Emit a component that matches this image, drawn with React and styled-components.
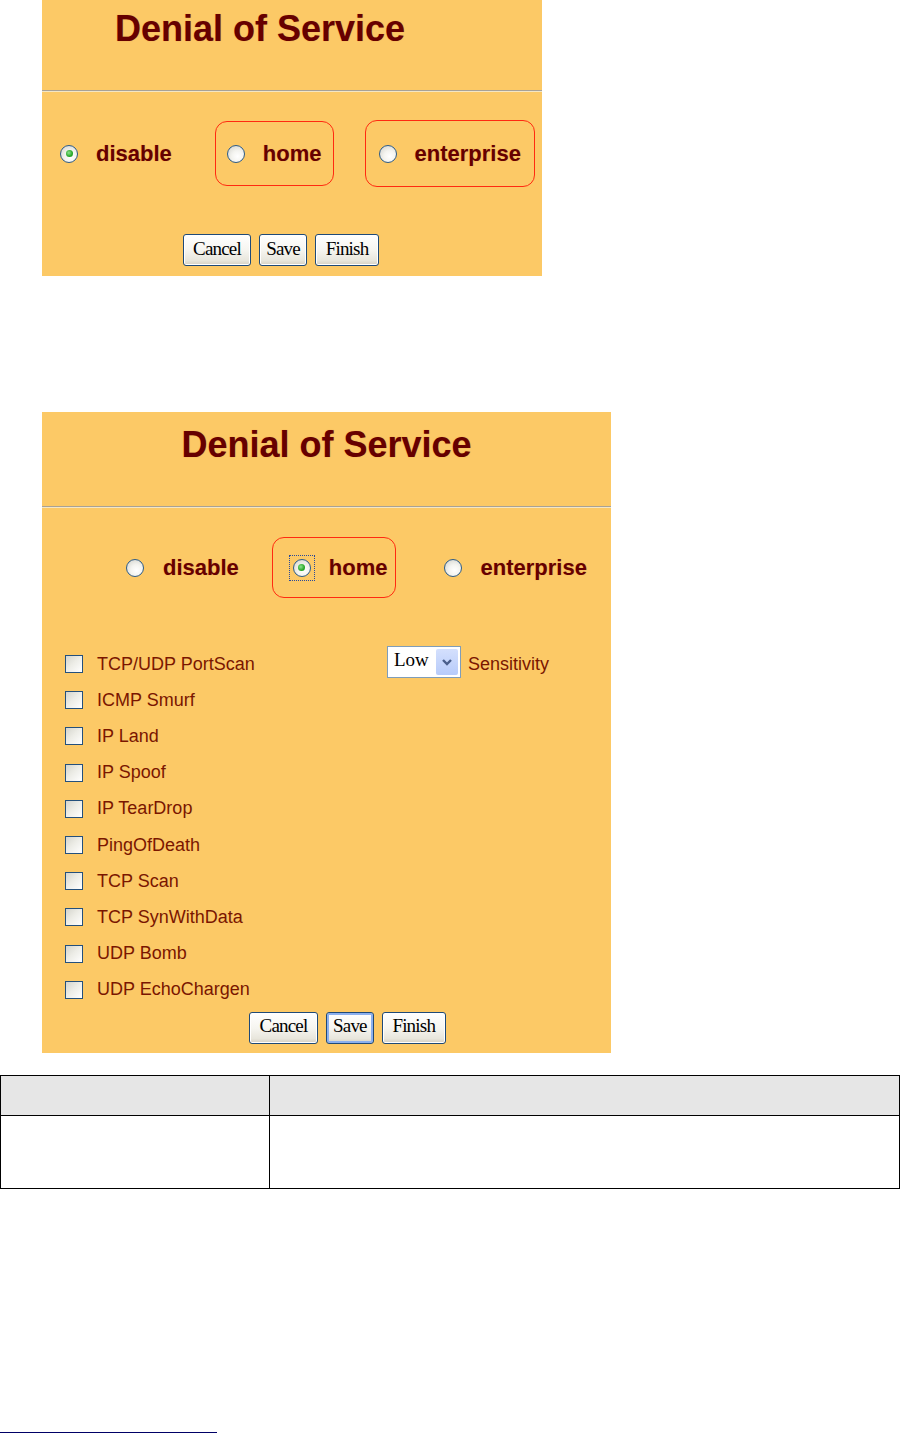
import React from "react";
import styled, { createGlobalStyle } from "styled-components";

const GlobalStyle = createGlobalStyle`
  html, body {
    margin: 0;
    padding: 0;
    background: #ffffff;
  }
  body {
    font-family: "Liberation Sans", Arial, sans-serif;
  }
`;

const Page = styled.div`
  width: 900px;
  height: 1434px;
  display: flex;
  flex-direction: column;
  overflow: hidden;
`;

const Panel = styled.div`
  margin: ${(p) => p.$top}px 0 0 42px;
  width: ${(p) => p.$width}px;
  height: ${(p) => p.$height}px;
  background: #fcc966;
  display: flex;
  flex-direction: column;
  flex-shrink: 0;
`;

const Title = styled.h1`
  margin: ${(p) => p.$top}px 0 0 0;
  padding-left: ${(p) => (p.$center ? 0 : p.$left)}px;
  text-align: ${(p) => (p.$center ? "center" : "left")};
  font-family: "Liberation Sans", Arial, sans-serif;
  font-size: 36px;
  line-height: 36px;
  font-weight: bold;
  color: #660000;
  text-shadow: 0 0 1px rgba(170, 40, 0, 0.35);
`;

const Rule = styled.div`
  margin-top: 43px;
  height: 1px;
  background: #a8a297;
  border-bottom: 1px solid #f4e6c4;
`;

const RadioRow = styled.div`
  margin-top: ${(p) => p.$top}px;
  padding-left: ${(p) => p.$left}px;
  display: flex;
  align-items: center;
  gap: ${(p) => p.$gap || 0}px;
`;

const RadioOption = styled.label`
  box-sizing: border-box;
  height: ${(p) => p.$height}px;
  margin-left: ${(p) => p.$ml || 0}px;
  padding: 0 ${(p) => p.$pr}px 0 ${(p) => p.$pl}px;
  display: flex;
  align-items: center;
  border: 1.5px solid ${(p) => (p.$boxed ? "#ff2a10" : "transparent")};
  border-radius: 12px;
`;

const Focus = styled.span`
  display: inline-flex;
  padding: 3px;
  border: 1px dotted #2a4a9a;
`;

const Radio = styled.span`
  box-sizing: border-box;
  width: 18px;
  height: 18px;
  border-radius: 50%;
  border: 1.5px solid #2c5c8a;
  background: radial-gradient(circle at 60% 65%, #ffffff 0%, #f4f4f0 40%, #cfcfc8 100%);
  display: inline-flex;
  align-items: center;
  justify-content: center;
  flex-shrink: 0;

  &::after {
    content: "";
    width: 7px;
    height: 7px;
    border-radius: 50%;
    background: radial-gradient(circle at 40% 40%, #8fe28f 0%, #27a827 60%, #178a17 100%);
    display: ${(p) => (p.$checked ? "block" : "none")};
  }
`;

const RadioLabel = styled.span`
  margin-left: ${(p) => p.$gap}px;
  font-size: 22px;
  font-weight: bold;
  color: #660000;
  text-shadow: 0 0 1px rgba(170, 40, 0, 0.3);
  white-space: nowrap;
`;

const ButtonRow = styled.div`
  margin-top: ${(p) => p.$top}px;
  padding-left: ${(p) => p.$left}px;
  display: flex;
  gap: 8px;
`;

const Button = styled.button`
  box-sizing: border-box;
  height: 32px;
  min-width: ${(p) => p.$width}px;
  padding: 0 6px 3px;
  font-family: "Liberation Serif", "Times New Roman", serif;
  font-size: 19px;
  letter-spacing: -0.8px;
  color: #000;
  border: 1px solid #1f4a78;
  border-radius: 3px;
  background: linear-gradient(#ffffff 0%, #f6f5f0 50%, #e8e6dc 85%, #d6d0c3 100%);
  box-shadow: ${(p) => (p.$focused ? "inset 0 0 0 2px #8cb0ee" : "inset 0 0 0 1px #ffffff")};
  line-height: 26px;
  cursor: pointer;
`;

const CheckList = styled.div`
  margin-top: 48px;
  padding-left: 23px;
  display: flex;
  flex-direction: column;
`;

const CheckRow = styled.div`
  height: 36.2px;
  display: flex;
  align-items: center;
`;

const CheckCell = styled.label`
  width: 322px;
  display: flex;
  align-items: center;
`;

const Checkbox = styled.span`
  box-sizing: border-box;
  width: 18px;
  height: 18px;
  border: 1.5px solid #24507c;
  background: linear-gradient(135deg, #d4d4cc 0%, #ececE6 45%, #ffffff 100%);
  flex-shrink: 0;
`;

const CheckLabel = styled.span`
  margin-left: 14px;
  font-size: 18px;
  color: #7a1600;
  white-space: nowrap;
`;

const Select = styled.div`
  box-sizing: border-box;
  width: 74px;
  height: 32px;
  margin-top: -4px;
  border: 1px solid #7f9db9;
  background: #ffffff;
  display: flex;
  align-items: center;
  justify-content: space-between;
  padding: 2px;
`;

const SelectText = styled.span`
  padding-left: 4px;
  font-family: "Liberation Serif", "Times New Roman", serif;
  font-size: 19px;
  color: #000;
  align-self: flex-start;
  line-height: 22px;
`;

const SelectArrow = styled.span`
  width: 22px;
  height: 26px;
  border-radius: 2px;
  background: linear-gradient(#d4e0fd, #b7cbfa);
  display: flex;
  align-items: center;
  justify-content: center;
`;

const SelectNote = styled.span`
  margin-left: 7px;
  font-size: 18px;
  color: #7a1600;
`;

const Table = styled.div`
  margin-top: 22px;
  width: 900px;
  box-sizing: border-box;
  border: 1px solid #000;
  display: grid;
  grid-template-columns: 269px 1fr;
  grid-template-rows: 40px 72px;
`;

const Cell = styled.div`
  background: ${(p) => (p.$head ? "#e6e6e6" : "#ffffff")};
  border-right: ${(p) => (p.$first ? "1px solid #000" : "none")};
  border-bottom: ${(p) => (p.$head ? "1px solid #000" : "none")};
`;

const FootRule = styled.div`
  margin-top: auto;
  margin-bottom: 1px;
  width: 217px;
  height: 1px;
  background: #000066;
`;

const Chevron = () => (
  <svg width="12" height="10" viewBox="0 0 12 10">
    <path d="M2 3 L6 7 L10 3" fill="none" stroke="#4a5f8c" strokeWidth="2.4" />
  </svg>
);

const attacks = [
  "TCP/UDP PortScan",
  "ICMP Smurf",
  "IP Land",
  "IP Spoof",
  "IP TearDrop",
  "PingOfDeath",
  "TCP Scan",
  "TCP SynWithData",
  "UDP Bomb",
  "UDP EchoChargen",
];

export default function App() {
  return (
    <Page>
      <GlobalStyle />

      <Panel $top={0} $width={500} $height={276}>
        <Title $top={11} $left={73}>Denial of Service</Title>
        <Rule />
        <RadioRow $top={28} $left={6} $gap={31}>
          <RadioOption $height={65} $pl={11} $pr={11}>
            <Radio $checked />
            <RadioLabel $gap={18}>disable</RadioLabel>
          </RadioOption>
          <RadioOption $boxed $height={65} $pl={11} $pr={11}>
            <Radio />
            <RadioLabel $gap={18}>home</RadioLabel>
          </RadioOption>
          <RadioOption $boxed $height={67} $pl={13} $pr={13}>
            <Radio />
            <RadioLabel $gap={18}>enterprise</RadioLabel>
          </RadioOption>
        </RadioRow>
        <ButtonRow $top={47} $left={141}>
          <Button $width={68}>Cancel</Button>
          <Button $width={48}>Save</Button>
          <Button $width={64}>Finish</Button>
        </ButtonRow>
      </Panel>

      <Panel $top={136} $width={569} $height={641}>
        <Title $top={15} $center>Denial of Service</Title>
        <Rule />
        <RadioRow $top={29} $left={83}>
          <RadioOption $height={61} $pl={0} $pr={0}>
            <Radio />
            <RadioLabel $gap={19}>disable</RadioLabel>
          </RadioOption>
          <RadioOption $boxed $height={61} $pl={16} $pr={7} $ml={32}>
            <Focus>
              <Radio $checked />
            </Focus>
            <RadioLabel $gap={14}>home</RadioLabel>
          </RadioOption>
          <RadioOption $height={61} $pl={0} $pr={0} $ml={47}>
            <Radio />
            <RadioLabel $gap={19}>enterprise</RadioLabel>
          </RadioOption>
        </RadioRow>

        <CheckList>
          {attacks.map((name, i) => (
            <CheckRow key={name}>
              <CheckCell>
                <Checkbox />
                <CheckLabel>{name}</CheckLabel>
              </CheckCell>
              {i === 0 && (
                <>
                  <Select>
                    <SelectText>Low</SelectText>
                    <SelectArrow>
                      <Chevron />
                    </SelectArrow>
                  </Select>
                  <SelectNote>Sensitivity</SelectNote>
                </>
              )}
            </CheckRow>
          ))}
        </CheckList>

        <ButtonRow $top={4} $left={207}>
          <Button $width={69}>Cancel</Button>
          <Button $width={47} $focused>Save</Button>
          <Button $width={64}>Finish</Button>
        </ButtonRow>
      </Panel>

      <Table>
        <Cell $head $first />
        <Cell $head />
        <Cell $first />
        <Cell />
      </Table>

      <FootRule />
    </Page>
  );
}
